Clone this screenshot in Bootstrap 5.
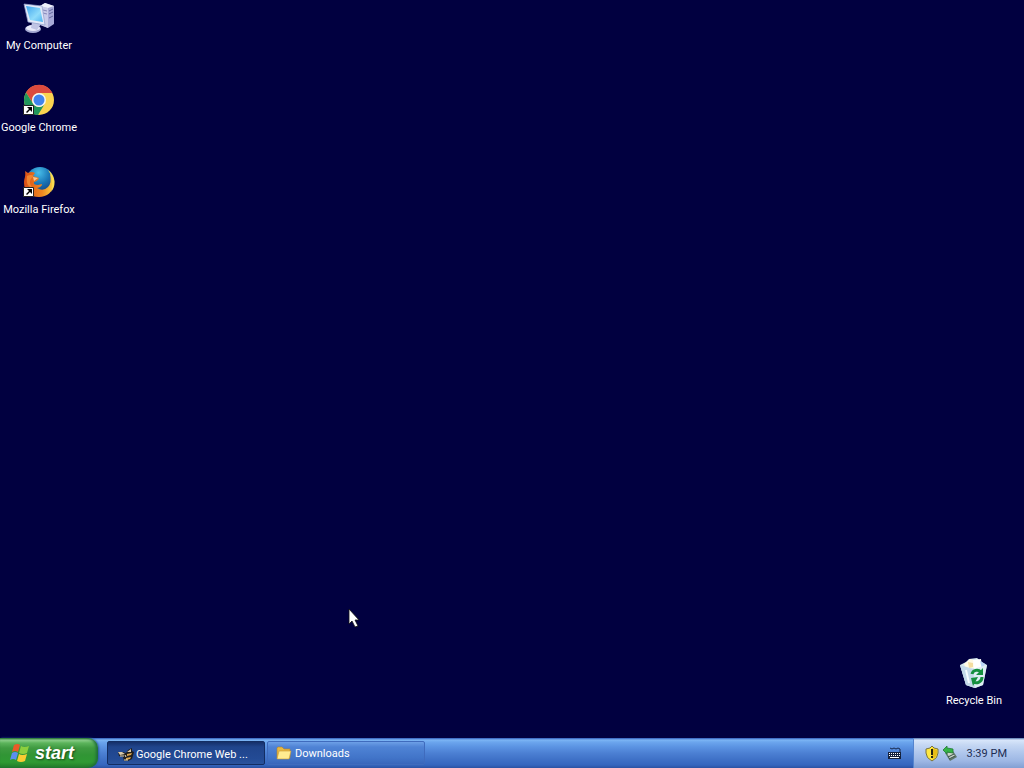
<!DOCTYPE html>
<html lang="en">
<head>
<meta charset="utf-8">
<meta name="viewport" content="width=device-width, initial-scale=1">
<title>Desktop</title>
<link href="https://cdn.jsdelivr.net/npm/bootstrap@5.3.0/dist/css/bootstrap.min.css" rel="stylesheet">
<style>
body{background:#010040;font:11px/14px Roboto,"Noto Sans",sans-serif;color:#fff;overflow:hidden}
.desk-item{width:78px;gap:5px;color:#fff}
.desk-item:hover{color:#fff}
.desk-item svg{width:32px;height:32px}
.desk-col{gap:31px;padding-top:2px}
.bin-spot{margin:0 11px 30px 0}
.pointer{left:348px;top:608px}
.taskbar{height:30px;background:linear-gradient(#2f5ab8 0,#7db5f4 2px,#6ca6ee 4px,#5b93e2 9px,#4c80d3 15px,#3e70c6 22px,#3566bf 27px,#2b52a2 30px)}
.start{width:98px;padding:0 0 0 10px;gap:5px;border:0;border-radius:0 10px 10px 0;color:#fff;font:italic bold 18px/28px "Liberation Sans",sans-serif;text-shadow:1px 1px 2px #184a18;background:linear-gradient(#297830 0,#8fd08c 2px,#5cb45c 5px,#3f9a41 10px,#319535 17px,#2f9a33 24px,#227a28 30px);box-shadow:inset -2px 0 3px #1e6b3a,1px 0 2px #2c5ca5}
.tasks{gap:2px;padding-left:9px}
.task{width:158px;height:24px;padding:2px 8px 0;gap:3px;color:#fff;font-size:11px;line-height:14px;border:1px solid #3f6bbd;border-radius:2px;background:linear-gradient(#6d9fe6,#4f83d5 5px,#4174c8 16px,#3866bb)}
.task:hover{color:#fff;background:#4779cf}
.task.active{padding:3px 10px 0;gap:2px;color:#fff;border-color:#132d62;background:linear-gradient(#152f69,#20458c 5px,#234b95 17px,#2a539d)}
.keys{width:16px;margin-right:11px}
.tray{width:111px;padding:2px 17px 0 10px;gap:2px;border-left:1px solid #5585cf;color:#202c52;background:linear-gradient(#5274ac 0,#d8e6fa 2px,#c5d7f3 7px,#afc6ec 15px,#9db7e4 23px,#829fd3 30px)}
</style>
</head>
<body class="d-flex flex-column vh-100">
<main class="flex-fill d-flex justify-content-between">
  <nav class="desk-col d-flex flex-column" aria-label="Desktop">
    <a href="#" class="desk-item d-flex flex-column align-items-center text-decoration-none text-nowrap">
      <svg viewBox="0 0 32 32" aria-hidden="true">
        <defs><linearGradient id="screen" x1="0" y1="0" x2="1" y2="1"><stop stop-color="#3fa4ee"/><stop offset=".6" stop-color="#8fdcfb"/><stop offset="1" stop-color="#4fb2ee"/></linearGradient></defs>
        <path d="M17 4l5-3 9 3v18l-6 4-8-3z" fill="#a7a9d7"/><path d="M17 4l8 2v20l-7-3z" fill="#c9cbe9"/><path d="M17 4l5-3 9 3-6 2z" fill="#eef0fa"/>
        <path d="M26 9l4-2M26 12l4-2M26 16l4-2" stroke="#65699f"/><path d="M20 8l4 1M20 11l4 1" stroke="#8587b8"/>
        <ellipse cx="10" cy="27" rx="8" ry="4" fill="#a5a9d2"/><ellipse cx="10" cy="26" rx="7" ry="3" fill="#e9eafa"/><path d="M9 20l9 2-4 6-6-2z" fill="#c0c4e4"/>
        <path d="M1 2l18 2 3 19-17-3z" fill="#e3e9f8" stroke="#919dcc" stroke-width=".7"/><path d="M3 4l14 2 3 14-13-2z" fill="url(#screen)"/>
      </svg>
      <span>My Computer</span>
    </a>
    <a href="#" class="desk-item d-flex flex-column align-items-center text-decoration-none text-nowrap">
      <svg viewBox="0 0 32 32" aria-hidden="true">
        <circle cx="16" cy="16" r="15" fill="#fbd450"/>
        <path d="M3 8.500A15 15 0 0 1 29.500 9H16a7 7 0 0 0-6 10.500z" fill="#dc4b3e"/>
        <path d="M3 8.500A15 15 0 0 0 15 31l7-11.500a7 7 0 0 1-12 0z" fill="#21965b"/>
        <circle cx="16" cy="16" r="7" fill="#f5f5f5"/><circle cx="16" cy="16" r="5.500" fill="#4284ed"/>
        <path d="M.5 21.500h10v9H.5z" fill="#fff" stroke="#222"/><path d="M4 23h5v5l-2-2-3 3-1-1 3-3z"/>
      </svg>
      <span>Google Chrome</span>
    </a>
    <a href="#" class="desk-item d-flex flex-column align-items-center text-decoration-none text-nowrap">
      <svg viewBox="0 0 32 32" aria-hidden="true">
        <defs><radialGradient id="globe" cx=".45" cy=".2" r=".8"><stop stop-color="#48bee9"/><stop offset=".5" stop-color="#1975b5"/><stop offset="1" stop-color="#113579"/></radialGradient><linearGradient id="fox" x1="0" y1="0" x2="1" y2="0"><stop stop-color="#d84e16"/><stop offset=".6" stop-color="#ee8820"/><stop offset="1" stop-color="#fad748"/></linearGradient></defs>
        <circle cx="17" cy="15" r="14" fill="url(#globe)"/>
        <path d="M2 5l3 2q4-2 7 0l-2 3 6 2q-1 3-5 4-1 3 4 3l4-1q0 3-5 4 6 4 11-1 4-4 2-13 5 4 4 9c-1 9-7 14-15 14C7 31 1 25 1 17 1 12 3 11 2 5z" fill="url(#fox)"/>
        <path d="M25 4c7 5 9 15 3 22 2-6 2-15-3-22z" fill="#fbdc50"/><path d="M4 10c4-2 7-1 6 1-4 2-4 8 0 11-5-1-7-4-6-12z" fill="#ef8430"/><path d="M10 11l5 1-4 3z" fill="#f6c794"/>
        <path d="M.5 21.500h10v9H.5z" fill="#fff" stroke="#222"/><path d="M4 23h5v5l-2-2-3 3-1-1 3-3z"/>
      </svg>
      <span>Mozilla Firefox</span>
    </a>
  </nav>
  <a href="#" class="desk-item bin-spot d-flex flex-column align-items-center text-decoration-none text-nowrap align-self-end">
    <svg viewBox="0 0 32 32" aria-hidden="true">
      <path d="M2 8l6-3 3-3 8-1 5 4 5 3-4 20-8 3-9-3z" fill="#d5e8ee"/>
      <path d="M6 7l6-5 4 1 1 8-9 1z" fill="#fff9e4"/><path d="M15 3l8-1 1 9-8 1z" fill="#fff"/><path d="M10 5l5 1v4l-4 1z" fill="#f4dda0"/><path d="M22 4l5 3-3 5z" fill="#b9d5f7"/>
      <path d="M2 8l13 4 14-4-4 20-8 3-9-3z" fill="#e0eef4" fill-opacity=".86"/><path d="M2 8l13 4 2 19-9-3z" fill="#b9d2e6" fill-opacity=".75"/><path d="M8 13l3 13" stroke="#f5fcff" stroke-width="2"/>
      <g fill="none" stroke="#15903f" stroke-width="3"><path d="M14 17c1-4 6-5 9-2"/><path d="M24 20c0 5-5 7-9 5"/></g><path d="M25 11v7h-7zM13 21l7-1-5 9z" fill="#15903f"/>
    </svg>
    <span>Recycle Bin</span>
  </a>
</main>
<footer class="taskbar d-flex align-items-stretch flex-shrink-0">
  <button type="button" class="start d-flex align-items-center">
    <svg width="20" height="20" viewBox="0 0 20 20" aria-hidden="true"><path d="M4 2q4-2 6 0L8 9q-3-2-6 0z" fill="#eb5a28"/><path d="M11 3q3 2 8 0l-2 7q-4 2-8 0z" fill="#8ccf3e"/><path d="M2 10q3-2 6 0l-2 7q-3-2-6 0z" fill="#5c8ff0"/><path d="M9 11q3 2 8 0l-2 7q-4 2-8 0z" fill="#f9cc32"/></svg>
    <span>start</span>
  </button>
  <nav class="tasks d-flex align-items-center flex-fill" aria-label="Open windows">
    <button type="button" class="task active btn d-flex align-items-center text-nowrap">
      <svg width="16" height="16" viewBox="0 0 16 16" aria-hidden="true"><path d="M0 5h5l3 1 2-3 4-2v3l2 1-2 7-4 2H6l-1-4-4-1z" fill="#211e1b"/><path d="M0 5l4 0 3 2-5 1zM9 5l4-3v3z" fill="#d8c9ac"/><path d="M9 7l5-1-1 2-4 1zM8 11l5-1-1 2-4 1z" fill="#dda64f"/><path d="M2 9h4M6 13h4M7 8l1 2" stroke="#eee2c9"/></svg>
      <span>Google Chrome Web ...</span>
    </button>
    <button type="button" class="task btn d-flex align-items-center text-nowrap">
      <svg width="16" height="16" viewBox="0 0 16 16" aria-hidden="true"><path d="M1 12V2l1-1h4l2 2h6v9z" fill="#e7b843" stroke="#b78526" stroke-width=".6"/><path d="M1 13l2-8h12l-2 8z" fill="#ffeb91" stroke="#c99932" stroke-width=".6"/></svg>
      <span>Downloads</span>
    </button>
  </nav>
  <button type="button" class="keys btn p-0 border-0 d-flex align-items-center" aria-label="On-screen keyboard">
    <svg width="16" height="16" viewBox="0 0 16 16" aria-hidden="true"><path d="M4 3l2 1 2-1 2 1 2-1 2 1v3" fill="none" stroke="#17284b"/><path d="M2 7h13v7H2z" fill="#15213c"/><path d="M3 8.500h11M3 10.500h11" stroke="#fff" stroke-dasharray="1 1"/><path d="M4 12.500h9" stroke="#fff"/></svg>
  </button>
  <div class="tray d-flex align-items-center text-nowrap">
    <svg width="16" height="16" viewBox="0 0 16 16" role="img" aria-label="Security alert"><path d="M8 0l2 2 4 1v4q0 5-6 8-6-3-6-8V3l4-1z" fill="#ffe842" stroke="#79733c"/><path d="M8 2l2 1 3 1v3q0 4-5 6z" fill="#e7bd17"/><path d="M7 3h2v6H7zM7 10h2v2H7z" fill="#252414"/></svg>
    <svg width="16" height="16" viewBox="0 0 16 16" role="img" aria-label="Safely remove hardware"><path d="M3 7l8-2 4 6-7 4z" fill="#5d766a"/><path d="M5 7l5-1 3 4-5 3z" fill="#cad3c8"/><path d="M6 11l6-3M7 13l6-3" stroke="#354c45"/><path d="M1 4l4-4v2l6 1v4L5 6v2z" fill="#35b445" stroke="#237a35" stroke-width=".8"/></svg>
    <time class="ms-auto">3:39 PM</time>
  </div>
</footer>
<svg class="pointer position-absolute" width="12" height="21" viewBox="0 0 12 21" aria-hidden="true"><path d="M1 1v15l3-3 3 6 3-1-3-6h4z" fill="#fff" stroke="#111" stroke-width=".8"/></svg>
<script src="https://cdn.jsdelivr.net/npm/bootstrap@5.3.0/dist/js/bootstrap.bundle.min.js"></script>
</body>
</html>
